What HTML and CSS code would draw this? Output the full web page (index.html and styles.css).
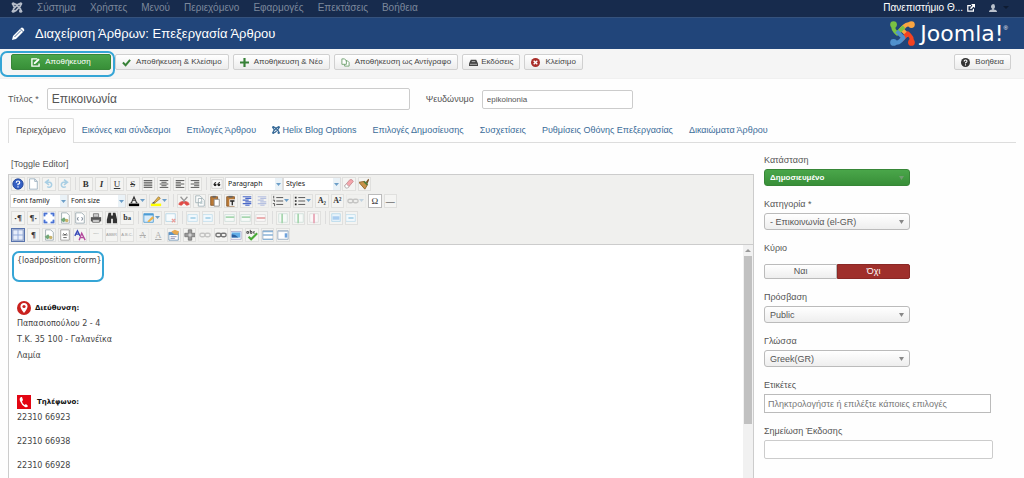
FILE: index.html
```html
<!DOCTYPE html>
<html lang="el">
<head>
<meta charset="utf-8">
<title>Διαχείριση Άρθρων: Επεξεργασία Άρθρου</title>
<link rel="stylesheet" href="styles.css">
</head>
<body>
<svg class="defs" aria-hidden="true">
  <symbol id="joomla" viewBox="0 0 16 16"><g fill="none" stroke="currentColor" stroke-width="2.4"><path d="M3 3q3-1 5 2l5 5v3M13 3q1 3-2 5l-5 5H3M3 3q-1 3 2 5M13 13q1-3-2-5M13 3q-3-1-5 2l-5 5v3M3 3"/></g><g fill="currentColor"><circle cx="2.6" cy="2.6" r="2.4"/><circle cx="13.4" cy="2.6" r="2.4"/><circle cx="2.6" cy="13.4" r="2.4"/><circle cx="13.4" cy="13.4" r="2.4"/></g></symbol>
  <symbol id="page" viewBox="0 0 14 14"><path d="M3 1h6l3 3v9H3z" fill="#fff" stroke="#9ab0c0"/><path d="M9 1v3h3" fill="none" stroke="#9ab0c0"/></symbol>
  <symbol id="undo" viewBox="0 0 14 14"><path d="M4 5h4a3 3 0 1 1-3 5M7 2L3 5l4 3" fill="none" stroke="#a9cfe4" stroke-width="1.8"/></symbol>
  <symbol id="redo" viewBox="0 0 14 14"><path d="M10 5H6a3 3 0 1 0 3 5M7 2l4 3-4 3" fill="none" stroke="#a9cfe4" stroke-width="1.8"/></symbol>
  <symbol id="just" viewBox="0 0 14 14"><path d="M2 3h10M2 5h10M2 7h10M2 9h10M2 11h10" stroke="#444"/></symbol>
  <symbol id="center" viewBox="0 0 14 14"><path d="M2 3h10M4 5h6M2 7h10M4 9h6M2 11h10" stroke="#444"/></symbol>
  <symbol id="left" viewBox="0 0 14 14"><path d="M2 3h10M2 5h6M2 7h10M2 9h6M2 11h10" stroke="#444"/></symbol>
  <symbol id="right" viewBox="0 0 14 14"><path d="M2 3h10M6 5h6M2 7h10M6 9h6M2 11h10" stroke="#444"/></symbol>
  <symbol id="quote" viewBox="0 0 14 14"><path d="M1 2h12v10H1z" fill="#fafafa" stroke="#ccc"/><g fill="#222"><circle cx="4.8" cy="8" r="1.7"/><circle cx="9.2" cy="8" r="1.7"/></g><path d="M3.5 8q0-3 2.5-3M8 8q0-3 2.500-3" fill="none" stroke="#222"/></symbol>
  <symbol id="eraser" viewBox="0 0 14 14"><path d="M2 9l6-7q3-1 4 2l-6 7q-3 1-4-2z" fill="#f4a6ac" stroke="#c98b90"/><path d="M2 9l2-2 3 3-2 2q-3 0-3-3z" fill="#fff" stroke="#aaa"/></symbol>
  <symbol id="brush" viewBox="0 0 14 14"><path d="M9 5l3-4 1 1-2 5z" fill="#7a5326"/><path d="M1 5l6-1 4 4-3 5z" fill="#c9934a" stroke="#8d6128"/><path d="M7 4l4 4" stroke="#4f7d39" stroke-width="2"/></symbol>
  <symbol id="forecolor" viewBox="0 0 14 14"><path d="M1 10h12v3H1z"/><path d="M4 9l3-7 3 7M5 6h4M3 9h2M9 9h2" fill="none" stroke="#333" stroke-width="1.200"/></symbol>
  <symbol id="marker" viewBox="0 0 14 14"><path d="M1 10h12v3H1z" fill="#ff0"/><path d="M4 9l6-7 2 2-6 5z" fill="#e8b84a" stroke="#9a7738"/><path d="M2 10l2-2 2 2z" fill="#555"/></symbol>
  <symbol id="cut" viewBox="0 0 14 14"><path d="M3 2l6 7M11 2L5 9" stroke="#999" stroke-width="1.500"/><path d="M1 11q1-4 5-3l1 1 1-1q4-1 5 3l-3 1-3-3-3 3z" fill="#df4a45" stroke="#df4a45"/></symbol>
  <symbol id="copy" viewBox="0 0 14 14"><path d="M2 1h5l2 2v6H2zM5 4h5l2 2v7H5z" fill="#fff" stroke="#9fb0b4"/><path d="M7 8h3M7 10h3" stroke="#b9cbd0"/></symbol>
  <symbol id="paste" viewBox="0 0 14 14"><path d="M2 2h8v10H2z" fill="#bd7b36" stroke="#87572a"/><path d="M4 1h4v2H4z" fill="#666"/><path d="M6 5h6v8H6z" fill="#fff" stroke="#888"/></symbol>
  <symbol id="pastetext" viewBox="0 0 14 14"><path d="M2 2h9v11H2z" fill="#bd7b36" stroke="#87572a"/><path d="M4 1h5v2H4z" fill="#666"/><path d="M5 5h7v8H5z" fill="#eee"/><path d="M6 7h5M8.500 7v5" stroke="#222" stroke-width="1.500"/></symbol>
  <symbol id="indent" viewBox="0 0 14 14"><path d="M2 2h10M5 4h7M2 6h7M5 8h7M2 10h10M5 12h5" stroke="#4a68c8" stroke-width="1.300"/></symbol>
  <symbol id="ol" viewBox="0 0 14 14"><path d="M5 3h8M5 7h8M5 11h8" stroke="#444"/><path d="M2 1v3M1 6h2v2M1 10h2v3" fill="none" stroke="#444"/></symbol>
  <symbol id="ul" viewBox="0 0 14 14"><path d="M5 3h8M5 7h8M5 11h8" stroke="#444"/><path d="M1 3h2M1 7h2M1 11h2" stroke="#222" stroke-width="2"/></symbol>
  <symbol id="full" viewBox="0 0 14 14"><path d="M1 1h12v12H1z" fill="#6691e8"/><path d="M3 3h8v8H3z" fill="#fff"/><path d="M5 1h4v12H5zM1 5h12v4H1z" fill="#fff"/><path d="M1.500 5V1.500H5M9 1.500h3.500V5M12.500 9v3.500H9M5 12.500H1.500V9" fill="none" stroke="#4970d2" stroke-width="1.500"/></symbol>
  <symbol id="tmpl" viewBox="0 0 14 14"><path d="M3 1h6l3 3v9H3z" fill="#fff" stroke="#9aa8ae"/><path d="M2 9l4-3 3 4-4 2z" fill="#72a879"/><circle cx="9" cy="10" r="2" fill="#c9b46c"/></symbol>
  <symbol id="code" viewBox="0 0 14 14"><path d="M2 1h7l3 3v9H2z" fill="#fff" stroke="#9aa8ae"/><path d="M5 6L4 8l1 2M9 6l1 2-1 2" fill="none" stroke="#567"/></symbol>
  <symbol id="print" viewBox="0 0 14 14"><path d="M4 2h6v4H4z" fill="#ccc" stroke="#777"/><path d="M1 6h12v5H1z" fill="#555"/><path d="M3 9h8v3H3z" fill="#ddd" stroke="#666"/></symbol>
  <symbol id="find" viewBox="0 0 14 14"><path d="M3 1h3v3h2V1h3l2 8v4H8V8H6v5H1V9z" fill="#333"/></symbol>
  <symbol id="tableedit" viewBox="0 0 14 14"><path d="M1 2h11v10H1z" fill="#d9ecfa" stroke="#4c9cd5"/><path d="M1 3h11" stroke="#4c9cd5" stroke-width="2"/><path d="M5 11l6-6 2 2-6 5z" fill="#eeb34c"/></symbol>
  <symbol id="tabledel" viewBox="0 0 14 14"><path d="M1 2h11v9H1z" fill="#f7fbfd" stroke="#b4d5e6"/><path d="M8 8l4 4M12 8l-4 4" stroke="#ea9d98" stroke-width="1.500"/></symbol>
  <symbol id="rowblue" viewBox="0 0 14 14"><path d="M1 3h11v8H1z" fill="#f2f9fd" stroke="#c3dfec"/><path d="M4 7h6" stroke="#a6d2e8" stroke-width="2"/></symbol>
  <symbol id="rowgreen" viewBox="0 0 14 14"><path d="M1 3h11v8H1z" fill="#f7faf8" stroke="#d0dedb"/><path d="M2 6h10" stroke="#a6d6ae" stroke-width="2"/></symbol>
  <symbol id="rowred" viewBox="0 0 14 14"><path d="M1 3h11v8H1z" fill="#faf8f8" stroke="#ddd"/><path d="M2 7h10" stroke="#e7a3a4" stroke-width="2"/></symbol>
  <symbol id="colgreen" viewBox="0 0 14 14"><path d="M2 2h10v10H2z" fill="#f7faf8" stroke="#d0dedb"/><path d="M6 2v11" stroke="#a6d6ae" stroke-width="2"/></symbol>
  <symbol id="colred" viewBox="0 0 14 14"><path d="M2 2h10v10H2z" fill="#faf8f8" stroke="#ddd"/><path d="M7 2v11" stroke="#e7a3b4" stroke-width="2"/></symbol>
  <symbol id="cells" viewBox="0 0 14 14"><path d="M2 2h10v9H2z" fill="#e9f4fb" stroke="#b7d8ea"/><path d="M3 5h8v4H3z" fill="#a9cdf0"/></symbol>
  <symbol id="grid" viewBox="0 0 14 14"><path d="M1 1h12v12H1z" fill="#e8eefb" stroke="#8297c6"/><path d="M7 1v12M1 7h12" stroke="#8ba4d7"/></symbol>
  <symbol id="breakp" viewBox="0 0 14 14"><path d="M2 1h10v12H2z" fill="#fff" stroke="#999"/><path d="M4 7h6M5 5l2 2 2-2M5 10h4" fill="none" stroke="#555"/></symbol>
  <symbol id="styleprops" viewBox="0 0 14 14"><path d="M1 8l3-6 3 6M2 6h4" fill="none" stroke="#3949b8" stroke-width="1.600"/><path d="M6 13l3-8 4 8M7 10h4" fill="none" stroke="#b44a9d" stroke-width="1.600"/></symbol>
  <symbol id="attribs" viewBox="0 0 14 14"><path d="M1 4h11v9H1z" fill="#fff" stroke="#7195b4"/><path d="M1 4h11v3H1z" fill="#5b91c4"/><path d="M4 3l4-2 5 2-2 4-4-1z" fill="#e6a850"/><path d="M3 9h7M3 11h5" stroke="#88a"/></symbol>
  <symbol id="cross" viewBox="0 0 14 14"><path d="M5 1h4v4h4v4H9v4H5V9H1V5h4z" fill="#999" stroke="#777"/><path d="M5 7h4M7 5v4" stroke="#eee"/></symbol>
  <symbol id="chain" viewBox="0 0 14 14"><g fill="none" stroke="#777" stroke-width="1.600"><rect x="1" y="5" width="6" height="4" rx="2"/><rect x="7" y="5" width="6" height="4" rx="2"/></g></symbol>
  <symbol id="image" viewBox="0 0 14 14"><path d="M1 3h12v9H1z" fill="#fff" stroke="#aac"/><path d="M2 4h10v6H2z" fill="#62aee7"/><path d="M2 10V6q4 0 8 4z" fill="#2c5f9f"/></symbol>
  <symbol id="spell" viewBox="0 0 14 14"><path d="M3 9l3 3 7-7" fill="none" stroke="#49aa38" stroke-width="2.500"/><path d="M1 5V3h2v2H1M5 1v4h2V3H5M10 3H9v2h1" fill="none" stroke="#333"/></symbol>
  <symbol id="hbox" viewBox="0 0 14 14"><path d="M1 2h12v10H1z" fill="#fff" stroke="#91a7bd"/><path d="M1 3h12M1 7h12M1 12h12" stroke="#8ab3d6" stroke-width="1.500"/></symbol>
  <symbol id="vbox" viewBox="0 0 14 14"><path d="M1 2h12v10H1z" fill="#fff" stroke="#91a7bd"/><path d="M9 5h3v5H9z" fill="#6ea2dc"/><path d="M1 3h12" stroke="#b5c5d5"/></symbol>
</svg>

<div class="app">
  <nav class="navbar">
    <svg class="navbar-logo"><use href="#joomla"/></svg>
    <a href="#">Σύστημα</a><a href="#">Χρήστες</a><a href="#">Μενού</a><a href="#">Περιεχόμενο</a><a href="#">Εφαρμογές</a><a href="#">Επεκτάσεις</a><a href="#">Βοήθεια</a>
    <a class="site" href="#">Πανεπιστήμιο Θ... <svg viewBox="0 0 10 10"><path d="M5 2H1v7h7V6" fill="none" stroke="#fff" stroke-width="1.500"/><path d="M5 0h5v5L8.200 3.400 5 6.500 3.700 5.200 6.800 2z" fill="#fff"/></svg></a>
    <button class="user" aria-label="Χρήστης"><svg viewBox="0 0 10 10"><path d="M5 0q2.500 0 2.500 3T6 6v1q4 .5 4 3H0q0-2.500 4-3V6Q2.500 5 2.500 3T5 0z" fill="#b9c1cc"/></svg><i></i></button>
  </nav>

  <header class="header">
    <svg class="pencil" viewBox="0 0 14 14"><path d="M1 13l1-4 8-8q1-1 2.500.5T13 4l-8 8z" fill="#fff"/><path d="M3.500 10L10 3.500M9 1.500L12.500 5" stroke="#21457a" stroke-width=".8"/></svg>
    <h1>Διαχείριση Άρθρων: Επεξεργασία Άρθρου</h1>
    <div class="brand">
      <svg viewBox="0 0 26 26"><g fill="none" stroke-width="4.200" stroke-linejoin="round"><path d="M3.500 4v3q0 2 2 4l2 2 7-7" stroke="#7ac143"/><path d="M22 3.500h-3q-2 0-4 2l-3 3 7 7" stroke="#f9a541"/><path d="M22.500 22v-3q0-2-2-4l-2-2-7 7" stroke="#f44321"/><path d="M4 22.500h3q2 0 4-2l3-3-7-7" stroke="#5091cd"/><path d="M10 10.500l4.500-4.500" stroke="#7ac143"/></g><circle cx="3.700" cy="3.700" r="3.500" fill="#7ac143"/><circle cx="22.300" cy="3.700" r="3.500" fill="#f9a541"/><circle cx="22.300" cy="22.300" r="3.500" fill="#f44321"/><circle cx="3.700" cy="22.300" r="3.500" fill="#5091cd"/></svg>
      <span>Joomla!</span><sup>®</sup>
    </div>
  </header>

  <div class="actions">
    <div class="mark-wrap"><button class="btn save"><svg viewBox="0 0 10 10"><path d="M7 1H1v8h8V6" fill="none" stroke="#fff" stroke-width="1.500"/><path d="M3 7l.5-2L8 .5 9.700 2 5 6.500z" fill="#fff"/></svg>Αποθήκευση</button><span class="mark"></span></div>
    <button class="btn"><svg viewBox="0 0 10 10"><path d="M1 5l3 3 5-6" fill="none" stroke="#378137" stroke-width="2.200"/></svg>Αποθήκευση &amp; Κλείσιμο</button>
    <button class="btn"><svg viewBox="0 0 10 10"><path d="M5 0v10M0 5h10" stroke="#378137" stroke-width="2.400"/></svg>Αποθήκευση &amp; Νέο</button>
    <button class="btn"><svg viewBox="0 0 10 10"><path d="M1 1h3l2 2v4H1zM5 3h2l2 2v4H4V7" fill="#fff" stroke="#6fa06f"/></svg>Αποθήκευση ως Αντίγραφο</button>
    <button class="btn tight"><svg viewBox="0 0 10 10"><path d="M2 2h6l2 4v3H0V6z" fill="#444"/><path d="M3 4h4M1 7h8" stroke="#bbb"/></svg>Εκδόσεις</button>
    <button class="btn"><svg viewBox="0 0 10 10"><circle cx="5" cy="5" r="5" fill="#a92e2a"/><path d="M3 3l4 4M7 3L3 7" stroke="#fff" stroke-width="1.500"/></svg>Κλείσιμο</button>
    <button class="btn help"><svg viewBox="0 0 10 10"><circle cx="5" cy="5" r="5" fill="#333"/><path d="M3.500 4q0-1.700 1.600-1.700T6.600 4Q6.600 5 5 5.200V6.200M5 7v1.300" fill="none" stroke="#fff" stroke-width="1.200"/></svg>Βοήθεια</button>
  </div>

  <div class="titles">
    <label for="title">Τίτλος *</label><input id="title" class="title-input" value="Επικοινωνία">
    <label for="alias">Ψευδώνυμο</label><input id="alias" class="alias-input" value="epikoinonia">
  </div>

  <nav class="tabs">
    <a class="active" href="#">Περιεχόμενο</a><a href="#">Εικόνες και σύνδεσμοι</a><a href="#">Επιλογές Άρθρου</a><a href="#"><svg><use href="#joomla"/></svg> Helix Blog Options</a><a href="#">Επιλογές Δημοσίευσης</a><a href="#">Συσχετίσεις</a><a href="#">Ρυθμίσεις Οθόνης Επεξεργασίας</a><a href="#">Δικαιώματα Άρθρου</a>
  </nav>

  <main class="content">
    <section class="editor-col">
      <a class="toggle" href="#">[Toggle Editor]</a>
      <div class="editor">
        <div class="tools">
          <div class="row">
            <div class="g g4"><button><svg viewBox="0 0 14 14"><circle cx="7" cy="7" r="6" fill="#3460c4" stroke="#1f4291"/><path d="M5 5.500q0-2 2-2t2 2Q9 7 7 7.200v1.300M7 9.500V11" fill="none" stroke="#fff" stroke-width="1.400"/></svg></button><button><svg><use href="#page"/></svg></button><button><svg><use href="#undo"/></svg></button><button><svg><use href="#redo"/></svg></button></div>
            <i class="sep"></i>
            <div class="g g8"><button class="b">B</button><button class="i">I</button><button class="u">U</button><button class="s">S</button><button><svg><use href="#just"/></svg></button><button><svg><use href="#center"/></svg></button><button><svg><use href="#left"/></svg></button><button><svg><use href="#right"/></svg></button></div>
            <i class="sep"></i>
            <div class="g g1"><button><svg><use href="#quote"/></svg></button></div>
            <select aria-label="Format"><option>Paragraph</option></select><select aria-label="Styles"><option>Styles</option></select>
            <div class="g g2"><button><svg><use href="#eraser"/></svg></button><button><svg><use href="#brush"/></svg></button></div>
          </div>
          <div class="row">
            <select aria-label="Font family"><option>Font family</option></select><select aria-label="Font size"><option>Font size</option></select>
            <button class="split"><svg><use href="#forecolor"/></svg></button><button class="split"><svg><use href="#marker"/></svg></button>
            <i class="sep"></i>
            <div class="g g6"><button><svg><use href="#cut"/></svg></button><button><svg><use href="#copy"/></svg></button><button><svg><use href="#paste"/></svg></button><button><svg><use href="#pastetext"/></svg></button><button><svg><use href="#indent"/></svg></button><button class="off"><svg><use href="#indent"/></svg></button></div>
            <button class="split"><svg><use href="#ol"/></svg></button><button class="split"><svg><use href="#ul"/></svg></button>
            <div class="g g2"><button class="b small">A₂</button><button class="b small">A²</button></div>
            <button class="split off"><svg><use href="#chain"/></svg></button>
            <div class="g g2"><button class="omega">Ω</button><button>—</button></div>
          </div>
          <div class="row">
            <div class="g g8"><button class="b">·¶</button><button class="b">¶·</button><button><svg><use href="#full"/></svg></button><button><svg><use href="#tmpl"/></svg></button><button><svg><use href="#code"/></svg></button><button><svg><use href="#print"/></svg></button><button><svg><use href="#find"/></svg></button><button class="b small">b<sub>a</sub></button></div>
            <i class="sep"></i>
            <button class="split"><svg><use href="#tableedit"/></svg></button><div class="g g1"><button><svg><use href="#tabledel"/></svg></button></div>
            <i class="sep"></i>
            <div class="g g2"><button><svg><use href="#rowblue"/></svg></button><button><svg><use href="#rowblue"/></svg></button></div>
            <i class="sep"></i>
            <div class="g g3"><button><svg><use href="#rowgreen"/></svg></button><button><svg><use href="#rowgreen"/></svg></button><button><svg><use href="#rowred"/></svg></button></div>
            <i class="sep"></i>
            <div class="g g3"><button><svg><use href="#colgreen"/></svg></button><button><svg><use href="#colgreen"/></svg></button><button><svg><use href="#colred"/></svg></button></div>
            <i class="sep"></i>
            <div class="g g2"><button><svg><use href="#cells"/></svg></button><button><svg><use href="#rowblue"/></svg></button></div>
          </div>
          <div class="row">
            <div class="g g18"><button class="on"><svg><use href="#grid"/></svg></button><button class="b">¶</button><button><svg><use href="#tmpl"/></svg></button><button><svg><use href="#breakp"/></svg></button><button><svg><use href="#styleprops"/></svg></button><button class="tiny">““””</button><button class="tiny">ABBR</button><button class="tiny">A.B.C.</button><button class="s off">A</button><button class="u off">A</button><button><svg><use href="#attribs"/></svg></button><button><svg><use href="#cross"/></svg></button><button class="off"><svg><use href="#chain"/></svg></button><button><svg><use href="#chain"/></svg></button><button><svg><use href="#image"/></svg></button><button><svg><use href="#spell"/></svg></button><button><svg><use href="#hbox"/></svg></button><button><svg><use href="#vbox"/></svg></button></div>
          </div>
        </div>
        <div class="canvas">
          <div class="document">
            <p class="load">{loadposition cform}<span class="mark"></span></p>
            <p class="head"><svg viewBox="0 0 14 14"><circle cx="7" cy="7" r="7" fill="#c9211e"/><path d="M7 12Q3.500 7.500 3.500 5.500a3.500 3.500 0 0 1 7 0Q10.500 7.500 7 12z" fill="#fff"/><circle cx="7" cy="5.500" r="1.600" fill="#c9211e"/></svg><strong>Διεύθυνση:</strong></p>
            <p>Παπασιοπούλου 2 - 4</p>
            <p>Τ.Κ. 35 100 - Γαλανέϊκα</p>
            <p>Λαμία</p>
            <p class="head phone"><svg viewBox="0 0 14 14"><path d="M0 0h14v14H0z" fill="#e30613"/><path d="M4 2q-2 1-1 4 1.500 4 5 6 2 .8 3-1L9 9 7.500 10Q5.500 8.500 5 6.500L6 5 5 2z" fill="#fff"/></svg><strong>Τηλέφωνο:</strong></p>
            <p class="num">22310 66923</p>
            <p class="num">22310 66938</p>
            <p class="num">22310 66928</p>
          </div>
          <div class="scroll"><i class="up"></i><i class="thumb"></i></div>
        </div>
      </div>
    </section>

    <aside class="side">
      <label for="state">Κατάσταση</label><select id="state" class="chosen green"><option>Δημοσιευμένο</option></select>
      <label for="cat">Κατηγορία *</label><select id="cat" class="chosen"><option>- Επικοινωνία (el-GR)</option></select>
      <fieldset><legend>Κύριο</legend><div class="switch"><label><input type="radio" name="featured">Ναι</label><label><input type="radio" name="featured" checked>Όχι</label></div></fieldset>
      <label for="access">Πρόσβαση</label><select id="access" class="chosen"><option>Public</option></select>
      <label for="lang">Γλώσσα</label><select id="lang" class="chosen"><option>Greek(GR)</option></select>
      <label for="tags">Ετικέτες</label><input id="tags" class="tags" placeholder="Πληκτρολογήστε ή επιλέξτε κάποιες επιλογές">
      <label for="note">Σημείωση Έκδοσης</label><input id="note" class="note">
    </aside>
  </main>
</div>
</body>
</html>
```
FILE: styles.css
```css
* { box-sizing: border-box; }
body { margin: 0; background: #fefefe; color: #555; font: 9px/12px "Liberation Sans", Arial, sans-serif; }
button, input, select { margin: 0; padding: 0; font: inherit; color: inherit; }
a { color: #3a6c99; text-decoration: none; }
.defs { display: none; }
.app { min-height: 100vh; display: flex; flex-direction: column; }

.navbar { height: 18px; padding: 0 15px 2px 11px; display: flex; align-items: center; gap: 14px; background: #172b4d; border-bottom: 1px solid #35527d; font-size: 10px; }
.navbar a { color: #7c889c; }
.navbar-logo { width: 12px; height: 11px; color: #b4bcc9; }
.navbar .site { margin-left: auto; color: #fff; display: flex; align-items: center; gap: 4px; }
.site svg { width: 8px; height: 8px; }
.user { border: 0; background: none; display: flex; align-items: center; gap: 6px; }
.user svg { width: 8px; height: 8px; }
.user i { border: 3px solid transparent; border-top-color: #0e1b31; border-bottom: 0; }

.header { height: 31px; padding: 0 16px 0 11px; display: flex; align-items: center; gap: 10px; background: #21457a; color: #fff; }
.pencil { width: 14px; height: 14px; }
.header h1 { margin: 0; font-size: 13px; font-weight: 400; line-height: 18px; }
.brand { margin-left: auto; display: flex; align-items: center; }
.brand svg { width: 25px; height: 25px; margin-right: 5px; }
.brand span { font: 400 22px/28px "DejaVu Sans", sans-serif; }
.brand sup { align-self: flex-start; font-size: 6px; line-height: 16px; }

.actions { height: 30px; padding: 0 13px 3px 11px; display: flex; align-items: center; gap: 4px; background: #f5f5f5; border-bottom: 1px solid #f0f0f0; }
.btn { height: 16px; padding: 0 6px; display: flex; align-items: center; gap: 5px; border: 1px solid #d0d0d0; border-radius: 2px; background: linear-gradient(#fff, #ececec); font-size: 8px; color: #444; white-space: nowrap; }
.btn svg { width: 9px; height: 9px; }
.btn.tight { gap: 3px; }
.btn.save { width: 100px; justify-content: center; background: linear-gradient(#4aa64a, #388f38); border-color: #378637; color: #fff; }
.btn.help { margin-left: auto; }
.mark-wrap, .load { position: relative; }
.mark { position: absolute; border: 2px solid #35a5d6; border-radius: 7px; pointer-events: none; }
.mark-wrap .mark { inset: -3px -4px -7px -11px; }

.titles { padding: 9px 8px 8px; display: flex; align-items: center; }
.titles input { border: 1px solid #ccc; border-radius: 2px; background: #fff; }
.title-input { width: 36%; height: 22px; margin: 0 16px 0 8px; padding: 0 4px; font-size: 12px; }
.alias-input { width: 15%; height: 19px; margin-left: 8px; padding: 0 4px; font-size: 8px; }

.tabs { margin: 0 8px; display: flex; border-bottom: 1px solid #ddd; line-height: 23px; }
.tabs a { padding: 0 7px; border: 1px solid transparent; border-bottom: 0; white-space: nowrap; }
.tabs .active { margin-bottom: -1px; padding-bottom: 1px; color: #555; background: #fefefe; border-color: #ddd; border-radius: 2px 2px 0 0; }
.tabs svg { width: 8px; height: 8px; vertical-align: -1px; }

.content { flex: 1; padding: 0 8px; display: grid; grid-template-columns: minmax(0, 1fr) 25%; gap: 10px; }
.editor-col { padding-top: 15px; display: flex; flex-direction: column; }
.toggle { padding-left: 3px; color: #555; }
.editor { flex: 1; margin-top: 4px; display: flex; flex-direction: column; border: 1px solid #ccc; border-bottom: 0; }
.tools { padding: 0 1px 1px; background: #f0f0ee; border-bottom: 1px solid #ccc; }
.row { height: 17px; display: flex; align-items: center; }
.g { display: grid; grid-auto-flow: column; grid-auto-columns: minmax(0, 1fr); }
.g1 { width: 16px; }
.g2 { width: 31px; }
.g3 { width: 47px; }
.g4 { width: 62px; }
.g6 { width: 94px; }
.g8 { width: 125px; }
.g18 { width: 281px; }
.row button { height: 14px; margin: 0 1px; display: flex; align-items: center; justify-content: center; background: #f4f4f2; border: 1px solid #e0e0de; font: 9px/12px "Liberation Serif", serif; color: #333; overflow: hidden; }
.row button svg { width: 12px; height: 12px; flex: none; }
.row .b { font-weight: 700; }
.row .i { font-weight: 700; font-style: italic; }
.row .u { text-decoration: underline; }
.row .s { text-decoration: line-through; }
.row .small { font-size: 8px; }
.row .tiny { font: 4px/12px "Liberation Sans", sans-serif; color: #999; }
.row .omega { background: #fff; border-color: #bbb; }
.row .off { opacity: .35; }
.row .on { border-color: #5873ad; background: #c2cbe0; }
.row .split { width: 20px; justify-content: flex-start; background: url("data:image/svg+xml,%3Csvg xmlns='http://www.w3.org/2000/svg' width='5' height='3'%3E%3Cpath d='M0 0h5L2.500 3z' fill='%236c9ec8'/%3E%3C/svg%3E") no-repeat right 1px center; }
.sep { width: 1px; height: 13px; margin: 0 2px 0 3px; background: #ddd; }
.row select { width: 58px; height: 14px; padding: 0 2px; appearance: none; border: 1px solid #ddd; border-radius: 0; background: url("data:image/svg+xml,%3Csvg xmlns='http://www.w3.org/2000/svg' width='7' height='14'%3E%3Cpath d='M0 0h7v14H0z' fill='%23eaf2f7'/%3E%3Cpath d='M1 6h5L3.500 9z' fill='%236c9ec8'/%3E%3C/svg%3E") no-repeat right center #fff; font: 7px/12px "Noto Sans", sans-serif; color: #222; }

.canvas { flex: 1; display: flex; background: #fff; }
.document { flex: 1; padding: 8px; font: 8px/16px "DejaVu Sans", Verdana, sans-serif; color: #444; }
.document p { margin: 0; }
.document .load { width: max-content; margin-bottom: 31px; }
.load .mark { inset: -2px -2px -13px -5px; }
.document .head { display: flex; align-items: center; gap: 4px; color: #111; font-size: 7px; }
.head svg { width: 14px; height: 14px; }
.document .phone { margin-top: 30px; gap: 6px; }
.document .num { margin-bottom: 8px; }
.scroll { width: 10px; padding: 4px 1px 0; display: flex; flex-direction: column; align-items: center; background: #f1f1f1; }
.up { border: 3px solid transparent; border-bottom-color: #999; border-top: 0; }
.thumb { width: 8px; height: 168px; margin-top: 4px; background: #c1c1c1; }

.side { padding-top: 11px; }
.side > label, .side legend { display: block; margin-bottom: 3px; padding: 0; }
.side select, .side > input { display: block; margin-bottom: 12px; }
.chosen { width: 58%; height: 17px; padding: 0 5px; appearance: none; border: 1px solid #bbb; border-radius: 3px; background: url("data:image/svg+xml,%3Csvg xmlns='http://www.w3.org/2000/svg' width='5' height='4'%3E%3Cpath d='M0 0h5L2.500 4z' fill='%23888'/%3E%3C/svg%3E") no-repeat right 5px center, linear-gradient(#fff, #eee); }
.chosen.green { background: url("data:image/svg+xml,%3Csvg xmlns='http://www.w3.org/2000/svg' width='5' height='4'%3E%3Cpath d='M0 0h5L2.500 4z' fill='%23719c71'/%3E%3C/svg%3E") no-repeat right 5px center, linear-gradient(#4aa64a, #388f38); border-color: #378637; color: #fff; font-size: 8px; font-weight: 700; }
fieldset { margin: 0 0 12px; padding: 0; border: 0; }
.switch { width: 58%; height: 15px; margin-top: 7px; display: flex; }
.switch label { flex: 1; text-align: center; line-height: 13px; border: 1px solid #bbb; border-radius: 2px 0 0 2px; background: linear-gradient(#fff, #eee); }
.switch label:has(:checked) { background: #9f2f2b; border-color: #8a2825; border-radius: 0 2px 2px 0; color: #fff; }
.switch input { appearance: none; display: block; width: 0; height: 0; }
.side .tags, .side .note { border: 1px solid #bbb; background: #fff; padding: 0 3px; }
.side .tags { width: 90%; height: 19px; }
.side .note { width: 91%; height: 19px; border-color: #ccc; border-radius: 2px; }
.tags::placeholder { color: #777; opacity: 1; }
```
